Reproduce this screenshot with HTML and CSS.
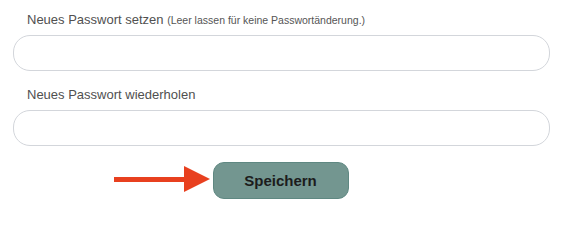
FILE: index.html
```html
<!DOCTYPE html>
<html lang="de">
<head>
<meta charset="utf-8">
<title>Passwort</title>
<link rel="stylesheet" href="styles.css">
</head>
<body>
<form class="form">
  <div class="field">
    <label class="label" for="pw1">Neues Passwort setzen <small class="hint">(Leer lassen für keine Passwortänderung.)</small></label>
    <input class="input" id="pw1" type="password">
  </div>
  <div class="field">
    <label class="label" for="pw2">Neues Passwort wiederholen</label>
    <input class="input" id="pw2" type="password">
  </div>
  <div class="actions">
    <div class="btn-wrap">
      <svg class="arrow" width="96" height="26" viewBox="0 0 96 26" aria-hidden="true">
        <rect x="0" y="11" width="72" height="5" fill="#e8401f"/>
        <polygon points="70,0 96,13 70,26" fill="#e8401f"/>
      </svg>
      <button class="btn" type="button">Speichern</button>
    </div>
  </div>
</form>
</body>
</html>
```
FILE: styles.css
```css
* { box-sizing: border-box; }
html, body { margin: 0; padding: 0; background: #fff; }
body { font-family: "Liberation Sans", Arial, Helvetica, sans-serif; color: #555; }
.form { padding: 12px 17px 0 13px; display: flex; flex-direction: column; }
.field { display: flex; flex-direction: column; gap: 7px; margin-bottom: 16px; }
.label { display: block; padding-left: 14px; font-size: 13px; line-height: 16px; color: #505050; }
.hint { font-size: 10.5px; color: #555; }
.input {
  display: block; width: 537px; height: 36px; margin: 0;
  border: 1px solid #d3d6db; border-radius: 17px; background: #fff;
  font: inherit; padding: 0 14px; outline: none;
}
.actions { display: flex; justify-content: center; width: 537px; }
.btn-wrap { position: relative; margin-left: -2px; }
.arrow { position: absolute; right: calc(100% + 3px); top: 4px; }
.btn {
  width: 136px; height: 37px; margin: 0;
  background: #739690; border: 1px solid #5f8882; border-radius: 11px;
  font-family: "Liberation Sans", Arial, sans-serif; font-weight: bold; font-size: 15px;
  color: #1c1c1c; cursor: pointer; padding: 0;
}
```
